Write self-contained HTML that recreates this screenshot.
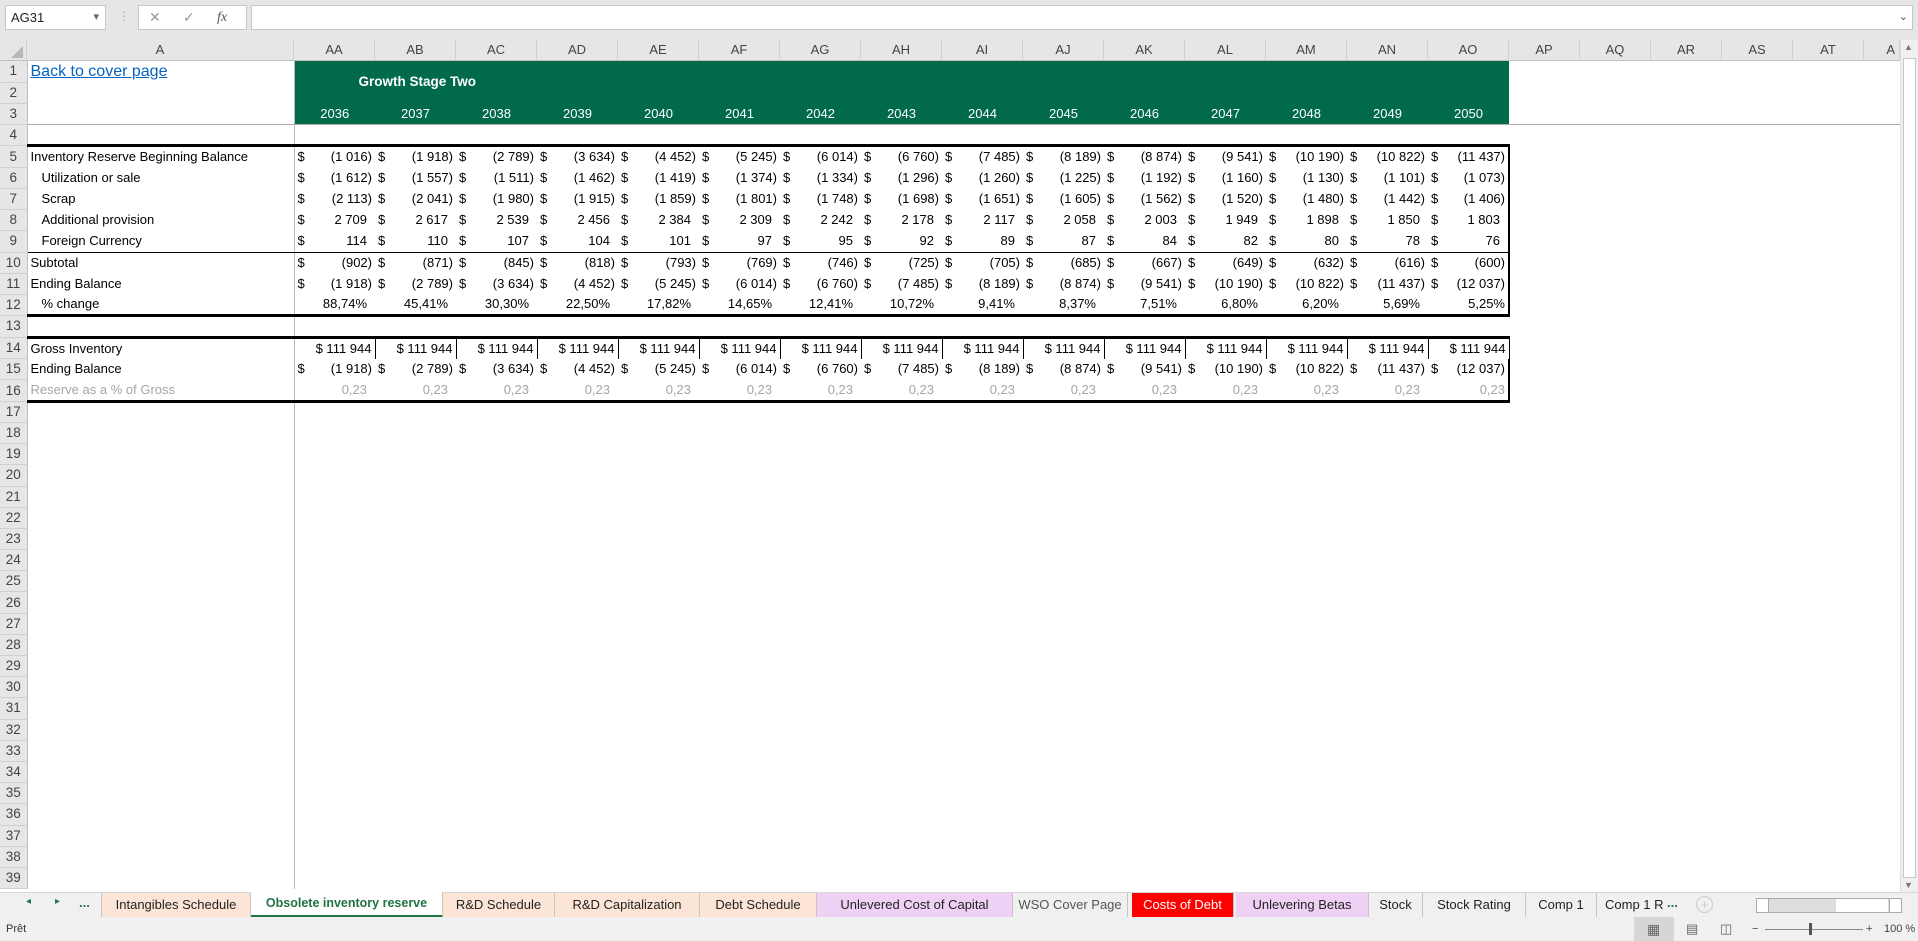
<!DOCTYPE html>
<html><head><meta charset="utf-8"><style>
*{box-sizing:border-box;margin:0;padding:0}
body{width:1918px;height:941px;overflow:hidden;background:#fff;font-family:"Liberation Sans",sans-serif;position:relative}
.top{position:absolute;left:0;top:0;width:1918px;height:40px;background:#e6e6e6}
.nb{position:absolute;left:5px;top:5px;width:101px;height:25px;background:#fff;border:1px solid #c6c6c6;font-size:13px;line-height:23px;padding-left:5px;color:#222}
.nb:after{content:"▾";position:absolute;right:6px;top:0;color:#666;font-size:11px}
.fx{position:absolute;left:138px;top:5px;width:109px;height:25px;background:#fff;border:1px solid #c6c6c6;color:#999;font-size:14px;line-height:23px}
.fb{position:absolute;left:251px;top:5px;width:1662px;height:25px;background:#fff;border:1px solid #c6c6c6}
.hdr{position:absolute;top:40px;height:21px;background:#e6e6e6;border-right:1px solid #d0d0d0;border-bottom:1px solid #c0c0c0;font-size:13px;color:#444;text-align:center;line-height:20px}
table{position:absolute;left:0;top:61px;border-collapse:collapse;table-layout:fixed;font-size:13px}
td{height:21.2px;padding:0 3px;white-space:nowrap;overflow:hidden;line-height:20px}
td.rh{background:#e6e6e6;color:#444;text-align:center;border-bottom:1px solid #d0d0d0;border-right:1px solid #c0c0c0;padding:0;font-size:13.5px}
td.a{border-right:1px solid #bbb}
td.n{text-align:right}
td.n i{float:left;font-style:normal}
td.p{padding-right:8px}
.g{background:#006a4b;color:#fff}
.t5 td:not(.rh){border-top:3px solid #000}
.b9 td:not(.rh){border-bottom:1px solid #000}
.b12 td:not(.rh){border-bottom:3px solid #000}
.t14 td:not(.rh){border-top:3px solid #000}
.b16 td:not(.rh){border-bottom:3px solid #000}
.r14 td.n{border-right:1px solid #000}
td.ao{border-right:2px solid #000!important}
.r16 td{color:#a6a6a6}
.r3 td.g{vertical-align:bottom;text-align:center}
.r3 td:not(.rh){border-bottom:1px solid #aaa}
.vs{position:absolute;left:1900px;top:40px;width:18px;height:852px;background:#f0f0f0;border-left:1px solid #ddd}
.tabs{position:absolute;left:0;top:892px;width:1918px;height:25px;background:#f0f0f0;border-top:1px solid #d6d6d6;font-size:13px}
.tab{position:absolute;top:0;height:24px;line-height:23px;text-align:center;border-right:1px solid #c6c6c6;color:#222}
.st{position:absolute;left:0;top:917px;width:1918px;height:24px;background:#f0f0f0;font-size:11px;line-height:24px;color:#333}
</style></head><body>
<div class="top">
<div class="nb">AG31</div>
<div style="position:absolute;left:118px;top:9px;color:#aaa;font-size:12px">⋮</div>
<div class="fx"><span style="position:absolute;left:10px">✕</span><span style="position:absolute;left:44px">✓</span><span style="position:absolute;left:78px;font-style:italic;color:#555;font-family:'Liberation Serif',serif">fx</span></div>
<div class="fb"><span style="position:absolute;right:4px;top:0;color:#555;font-size:11px;line-height:23px">⌄</span></div>
</div>
<div class="hdr" style="left:0;width:27px"><span style="position:absolute;right:3px;bottom:2px;width:0;height:0;border-left:12px solid transparent;border-bottom:12px solid #b8b8b8"></span></div>
<div class="hdr" style="left:27px;width:267px">A</div>
<div class="hdr" style="left:294px;width:81px">AA</div><div class="hdr" style="left:375px;width:81px">AB</div><div class="hdr" style="left:456px;width:81px">AC</div><div class="hdr" style="left:537px;width:81px">AD</div><div class="hdr" style="left:618px;width:81px">AE</div><div class="hdr" style="left:699px;width:81px">AF</div><div class="hdr" style="left:780px;width:81px">AG</div><div class="hdr" style="left:861px;width:81px">AH</div><div class="hdr" style="left:942px;width:81px">AI</div><div class="hdr" style="left:1023px;width:81px">AJ</div><div class="hdr" style="left:1104px;width:81px">AK</div><div class="hdr" style="left:1185px;width:81px">AL</div><div class="hdr" style="left:1266px;width:81px">AM</div><div class="hdr" style="left:1347px;width:81px">AN</div><div class="hdr" style="left:1428px;width:81px">AO</div>
<div class="hdr" style="left:1509px;width:71px">AP</div><div class="hdr" style="left:1580px;width:71px">AQ</div><div class="hdr" style="left:1651px;width:71px">AR</div><div class="hdr" style="left:1722px;width:71px">AS</div><div class="hdr" style="left:1793px;width:71px">AT</div><div class="hdr" style="left:1864px;width:36px;text-align:right;padding-right:4px">A</div>

<table>
<colgroup><col style="width:27px"><col style="width:267px"><col span="15" style="width:81px"><col style="width:391px"></colgroup>
<tr><td class="rh">1</td><td class="a" style="color:#0563c1;text-decoration:underline;font-size:16px">Back to cover page </td><td class="g" colspan="15" rowspan="2" style="padding-left:64px;font-weight:bold;font-size:13.5px">Growth Stage Two</td><td></td></tr>
<tr><td class="rh">2</td><td class="a"></td><td></td></tr>
<tr class="r3"><td class="rh">3</td><td class="a"></td><td class="g">2036</td><td class="g">2037</td><td class="g">2038</td><td class="g">2039</td><td class="g">2040</td><td class="g">2041</td><td class="g">2042</td><td class="g">2043</td><td class="g">2044</td><td class="g">2045</td><td class="g">2046</td><td class="g">2047</td><td class="g">2048</td><td class="g">2049</td><td class="g">2050</td><td></td></tr>
<tr><td class="rh">4</td><td class="a"></td><td colspan="15"></td><td></td></tr>
<tr class="t5"><td class="rh">5</td><td class="a">Inventory Reserve Beginning Balance</td><td class="n"><i>$</i>(1 016)</td><td class="n"><i>$</i>(1 918)</td><td class="n"><i>$</i>(2 789)</td><td class="n"><i>$</i>(3 634)</td><td class="n"><i>$</i>(4 452)</td><td class="n"><i>$</i>(5 245)</td><td class="n"><i>$</i>(6 014)</td><td class="n"><i>$</i>(6 760)</td><td class="n"><i>$</i>(7 485)</td><td class="n"><i>$</i>(8 189)</td><td class="n"><i>$</i>(8 874)</td><td class="n"><i>$</i>(9 541)</td><td class="n"><i>$</i>(10 190)</td><td class="n"><i>$</i>(10 822)</td><td class="n ao"><i>$</i>(11 437)</td><td style="border-top:0"></td></tr>
<tr><td class="rh">6</td><td class="a" style="padding-left:14px">Utilization or sale</td><td class="n"><i>$</i>(1 612)</td><td class="n"><i>$</i>(1 557)</td><td class="n"><i>$</i>(1 511)</td><td class="n"><i>$</i>(1 462)</td><td class="n"><i>$</i>(1 419)</td><td class="n"><i>$</i>(1 374)</td><td class="n"><i>$</i>(1 334)</td><td class="n"><i>$</i>(1 296)</td><td class="n"><i>$</i>(1 260)</td><td class="n"><i>$</i>(1 225)</td><td class="n"><i>$</i>(1 192)</td><td class="n"><i>$</i>(1 160)</td><td class="n"><i>$</i>(1 130)</td><td class="n"><i>$</i>(1 101)</td><td class="n ao"><i>$</i>(1 073)</td><td></td></tr>
<tr><td class="rh">7</td><td class="a" style="padding-left:14px">Scrap</td><td class="n"><i>$</i>(2 113)</td><td class="n"><i>$</i>(2 041)</td><td class="n"><i>$</i>(1 980)</td><td class="n"><i>$</i>(1 915)</td><td class="n"><i>$</i>(1 859)</td><td class="n"><i>$</i>(1 801)</td><td class="n"><i>$</i>(1 748)</td><td class="n"><i>$</i>(1 698)</td><td class="n"><i>$</i>(1 651)</td><td class="n"><i>$</i>(1 605)</td><td class="n"><i>$</i>(1 562)</td><td class="n"><i>$</i>(1 520)</td><td class="n"><i>$</i>(1 480)</td><td class="n"><i>$</i>(1 442)</td><td class="n ao"><i>$</i>(1 406)</td><td></td></tr>
<tr><td class="rh">8</td><td class="a" style="padding-left:14px">Additional provision</td><td class="n p"><i>$</i>2 709</td><td class="n p"><i>$</i>2 617</td><td class="n p"><i>$</i>2 539</td><td class="n p"><i>$</i>2 456</td><td class="n p"><i>$</i>2 384</td><td class="n p"><i>$</i>2 309</td><td class="n p"><i>$</i>2 242</td><td class="n p"><i>$</i>2 178</td><td class="n p"><i>$</i>2 117</td><td class="n p"><i>$</i>2 058</td><td class="n p"><i>$</i>2 003</td><td class="n p"><i>$</i>1 949</td><td class="n p"><i>$</i>1 898</td><td class="n p"><i>$</i>1 850</td><td class="n p ao"><i>$</i>1 803</td><td></td></tr>
<tr class="b9"><td class="rh">9</td><td class="a" style="padding-left:14px">Foreign Currency</td><td class="n p"><i>$</i>114</td><td class="n p"><i>$</i>110</td><td class="n p"><i>$</i>107</td><td class="n p"><i>$</i>104</td><td class="n p"><i>$</i>101</td><td class="n p"><i>$</i>97</td><td class="n p"><i>$</i>95</td><td class="n p"><i>$</i>92</td><td class="n p"><i>$</i>89</td><td class="n p"><i>$</i>87</td><td class="n p"><i>$</i>84</td><td class="n p"><i>$</i>82</td><td class="n p"><i>$</i>80</td><td class="n p"><i>$</i>78</td><td class="n p ao"><i>$</i>76</td><td style="border-bottom:0"></td></tr>
<tr><td class="rh">10</td><td class="a">Subtotal</td><td class="n"><i>$</i>(902)</td><td class="n"><i>$</i>(871)</td><td class="n"><i>$</i>(845)</td><td class="n"><i>$</i>(818)</td><td class="n"><i>$</i>(793)</td><td class="n"><i>$</i>(769)</td><td class="n"><i>$</i>(746)</td><td class="n"><i>$</i>(725)</td><td class="n"><i>$</i>(705)</td><td class="n"><i>$</i>(685)</td><td class="n"><i>$</i>(667)</td><td class="n"><i>$</i>(649)</td><td class="n"><i>$</i>(632)</td><td class="n"><i>$</i>(616)</td><td class="n ao"><i>$</i>(600)</td><td></td></tr>
<tr><td class="rh">11</td><td class="a">Ending Balance</td><td class="n"><i>$</i>(1 918)</td><td class="n"><i>$</i>(2 789)</td><td class="n"><i>$</i>(3 634)</td><td class="n"><i>$</i>(4 452)</td><td class="n"><i>$</i>(5 245)</td><td class="n"><i>$</i>(6 014)</td><td class="n"><i>$</i>(6 760)</td><td class="n"><i>$</i>(7 485)</td><td class="n"><i>$</i>(8 189)</td><td class="n"><i>$</i>(8 874)</td><td class="n"><i>$</i>(9 541)</td><td class="n"><i>$</i>(10 190)</td><td class="n"><i>$</i>(10 822)</td><td class="n"><i>$</i>(11 437)</td><td class="n ao"><i>$</i>(12 037)</td><td></td></tr>
<tr class="b12"><td class="rh">12</td><td class="a" style="padding-left:14px">% change</td><td class="n p">88,74%</td><td class="n p">45,41%</td><td class="n p">30,30%</td><td class="n p">22,50%</td><td class="n p">17,82%</td><td class="n p">14,65%</td><td class="n p">12,41%</td><td class="n p">10,72%</td><td class="n p">9,41%</td><td class="n p">8,37%</td><td class="n p">7,51%</td><td class="n p">6,80%</td><td class="n p">6,20%</td><td class="n p">5,69%</td><td class="n ao">5,25%</td><td style="border-bottom:0"></td></tr>
<tr><td class="rh">13</td><td class="a"></td><td colspan="15"></td><td></td></tr>
<tr class="t14 r14"><td class="rh">14</td><td class="a">Gross Inventory</td><td class="n">$ 111 944</td><td class="n">$ 111 944</td><td class="n">$ 111 944</td><td class="n">$ 111 944</td><td class="n">$ 111 944</td><td class="n">$ 111 944</td><td class="n">$ 111 944</td><td class="n">$ 111 944</td><td class="n">$ 111 944</td><td class="n">$ 111 944</td><td class="n">$ 111 944</td><td class="n">$ 111 944</td><td class="n">$ 111 944</td><td class="n">$ 111 944</td><td class="n">$ 111 944</td><td style="border-top:0"></td></tr>
<tr><td class="rh">15</td><td class="a">Ending Balance</td><td class="n"><i>$</i>(1 918)</td><td class="n"><i>$</i>(2 789)</td><td class="n"><i>$</i>(3 634)</td><td class="n"><i>$</i>(4 452)</td><td class="n"><i>$</i>(5 245)</td><td class="n"><i>$</i>(6 014)</td><td class="n"><i>$</i>(6 760)</td><td class="n"><i>$</i>(7 485)</td><td class="n"><i>$</i>(8 189)</td><td class="n"><i>$</i>(8 874)</td><td class="n"><i>$</i>(9 541)</td><td class="n"><i>$</i>(10 190)</td><td class="n"><i>$</i>(10 822)</td><td class="n"><i>$</i>(11 437)</td><td class="n ao"><i>$</i>(12 037)</td><td></td></tr>
<tr class="b16 r16"><td class="rh" style="color:#444">16</td><td class="a">Reserve as a % of Gross</td><td class="n p">0,23</td><td class="n p">0,23</td><td class="n p">0,23</td><td class="n p">0,23</td><td class="n p">0,23</td><td class="n p">0,23</td><td class="n p">0,23</td><td class="n p">0,23</td><td class="n p">0,23</td><td class="n p">0,23</td><td class="n p">0,23</td><td class="n p">0,23</td><td class="n p">0,23</td><td class="n p">0,23</td><td class="n ao">0,23</td><td style="border-bottom:0"></td></tr>
<tr><td class="rh">17</td><td class="a"></td><td colspan="16"></td></tr>
<tr><td class="rh">18</td><td class="a"></td><td colspan="16"></td></tr>
<tr><td class="rh">19</td><td class="a"></td><td colspan="16"></td></tr>
<tr><td class="rh">20</td><td class="a"></td><td colspan="16"></td></tr>
<tr><td class="rh">21</td><td class="a"></td><td colspan="16"></td></tr>
<tr><td class="rh">22</td><td class="a"></td><td colspan="16"></td></tr>
<tr><td class="rh">23</td><td class="a"></td><td colspan="16"></td></tr>
<tr><td class="rh">24</td><td class="a"></td><td colspan="16"></td></tr>
<tr><td class="rh">25</td><td class="a"></td><td colspan="16"></td></tr>
<tr><td class="rh">26</td><td class="a"></td><td colspan="16"></td></tr>
<tr><td class="rh">27</td><td class="a"></td><td colspan="16"></td></tr>
<tr><td class="rh">28</td><td class="a"></td><td colspan="16"></td></tr>
<tr><td class="rh">29</td><td class="a"></td><td colspan="16"></td></tr>
<tr><td class="rh">30</td><td class="a"></td><td colspan="16"></td></tr>
<tr><td class="rh">31</td><td class="a"></td><td colspan="16"></td></tr>
<tr><td class="rh">32</td><td class="a"></td><td colspan="16"></td></tr>
<tr><td class="rh">33</td><td class="a"></td><td colspan="16"></td></tr>
<tr><td class="rh">34</td><td class="a"></td><td colspan="16"></td></tr>
<tr><td class="rh">35</td><td class="a"></td><td colspan="16"></td></tr>
<tr><td class="rh">36</td><td class="a"></td><td colspan="16"></td></tr>
<tr><td class="rh">37</td><td class="a"></td><td colspan="16"></td></tr>
<tr><td class="rh">38</td><td class="a"></td><td colspan="16"></td></tr>
<tr><td class="rh">39</td><td class="a"></td><td colspan="16"></td></tr>
</table>
<div style="position:absolute;left:1509px;top:61px;width:391px;height:1px"></div>
<div class="vs"><div style="position:absolute;top:2px;left:3px;color:#777;font-size:9px">▲</div><div style="position:absolute;top:18px;left:2px;width:13px;height:820px;background:#fff;border:1px solid #c6c6c6"></div><div style="position:absolute;bottom:2px;left:3px;color:#777;font-size:9px">▼</div></div>

<div class="tabs">
<span style="position:absolute;left:26px;top:3px;color:#217346;font-size:10px">◂</span><span style="position:absolute;left:55px;top:3px;color:#217346;font-size:10px">▸</span><span style="position:absolute;left:79px;top:2px;color:#217346;font-weight:bold">...</span>
<div class="tab" style="left:101px;width:150px;background:#fce4d6;border-left:1px solid #c6c6c6">Intangibles Schedule</div>
<div class="tab" style="left:251px;width:192px;background:#fff;color:#217346;font-weight:bold;border-bottom:3px solid #217346;top:-1px;height:26px;font-size:12.5px">Obsolete inventory reserve</div>
<div class="tab" style="left:443px;width:112px;background:#fce4d6">R&amp;D Schedule</div>
<div class="tab" style="left:555px;width:145px;background:#fce4d6">R&amp;D Capitalization</div>
<div class="tab" style="left:700px;width:117px;background:#fce4d6">Debt Schedule</div>
<div class="tab" style="left:817px;width:196px;background:#efd1f6">Unlevered Cost of Capital</div>
<div class="tab" style="left:1013px;width:115px;color:#555">WSO Cover Page</div>
<div class="tab" style="left:1132px;width:102px;background:#ff0000;color:#fff">Costs of Debt</div>
<div class="tab" style="left:1236px;width:133px;background:#efd1f6">Unlevering Betas</div>
<div class="tab" style="left:1369px;width:54px">Stock</div>
<div class="tab" style="left:1423px;width:103px">Stock Rating</div>
<div class="tab" style="left:1526px;width:71px">Comp 1</div>
<div class="tab" style="left:1597px;width:70px;text-align:left;padding-left:8px;border-right:0">Comp 1 R</div>
<span style="position:absolute;left:1667px;top:2px;color:#217346;font-weight:bold">...</span>
<span style="position:absolute;left:1696px;top:3px;width:17px;height:17px;border:1px solid #ccc;border-radius:50%;color:#ccc;text-align:center;line-height:15px">+</span>
<div style="position:absolute;left:1756px;top:5px;width:146px;height:15px;background:#ddd;border:1px solid #aaa"><div style="position:absolute;left:0;top:0;width:12px;height:13px;background:#fff;border-right:1px solid #aaa"></div><div style="position:absolute;left:79px;top:0;width:52px;height:13px;background:#fff"></div><div style="position:absolute;right:0;top:0;width:12px;height:13px;background:#fff;border-left:1px solid #aaa"></div></div>
</div>
<div class="st"><span style="position:absolute;left:6px">Prêt</span>
<div style="position:absolute;left:1634px;top:0;width:40px;height:24px;background:#d6d6d6"></div>
<span style="position:absolute;left:1647px;top:0;color:#666;font-size:14px">▦</span><span style="position:absolute;left:1686px;top:0;color:#666;font-size:13px">▤</span><span style="position:absolute;left:1720px;top:0;color:#666;font-size:13px">◫</span>
<span style="position:absolute;left:1752px;color:#444">−</span><div style="position:absolute;left:1765px;top:12px;width:98px;height:1px;background:#888"></div><div style="position:absolute;left:1809px;top:6px;width:3px;height:12px;background:#555"></div><span style="position:absolute;left:1866px;color:#444">+</span><span style="position:absolute;left:1884px;color:#444">100 %</span></div>
</body></html>
